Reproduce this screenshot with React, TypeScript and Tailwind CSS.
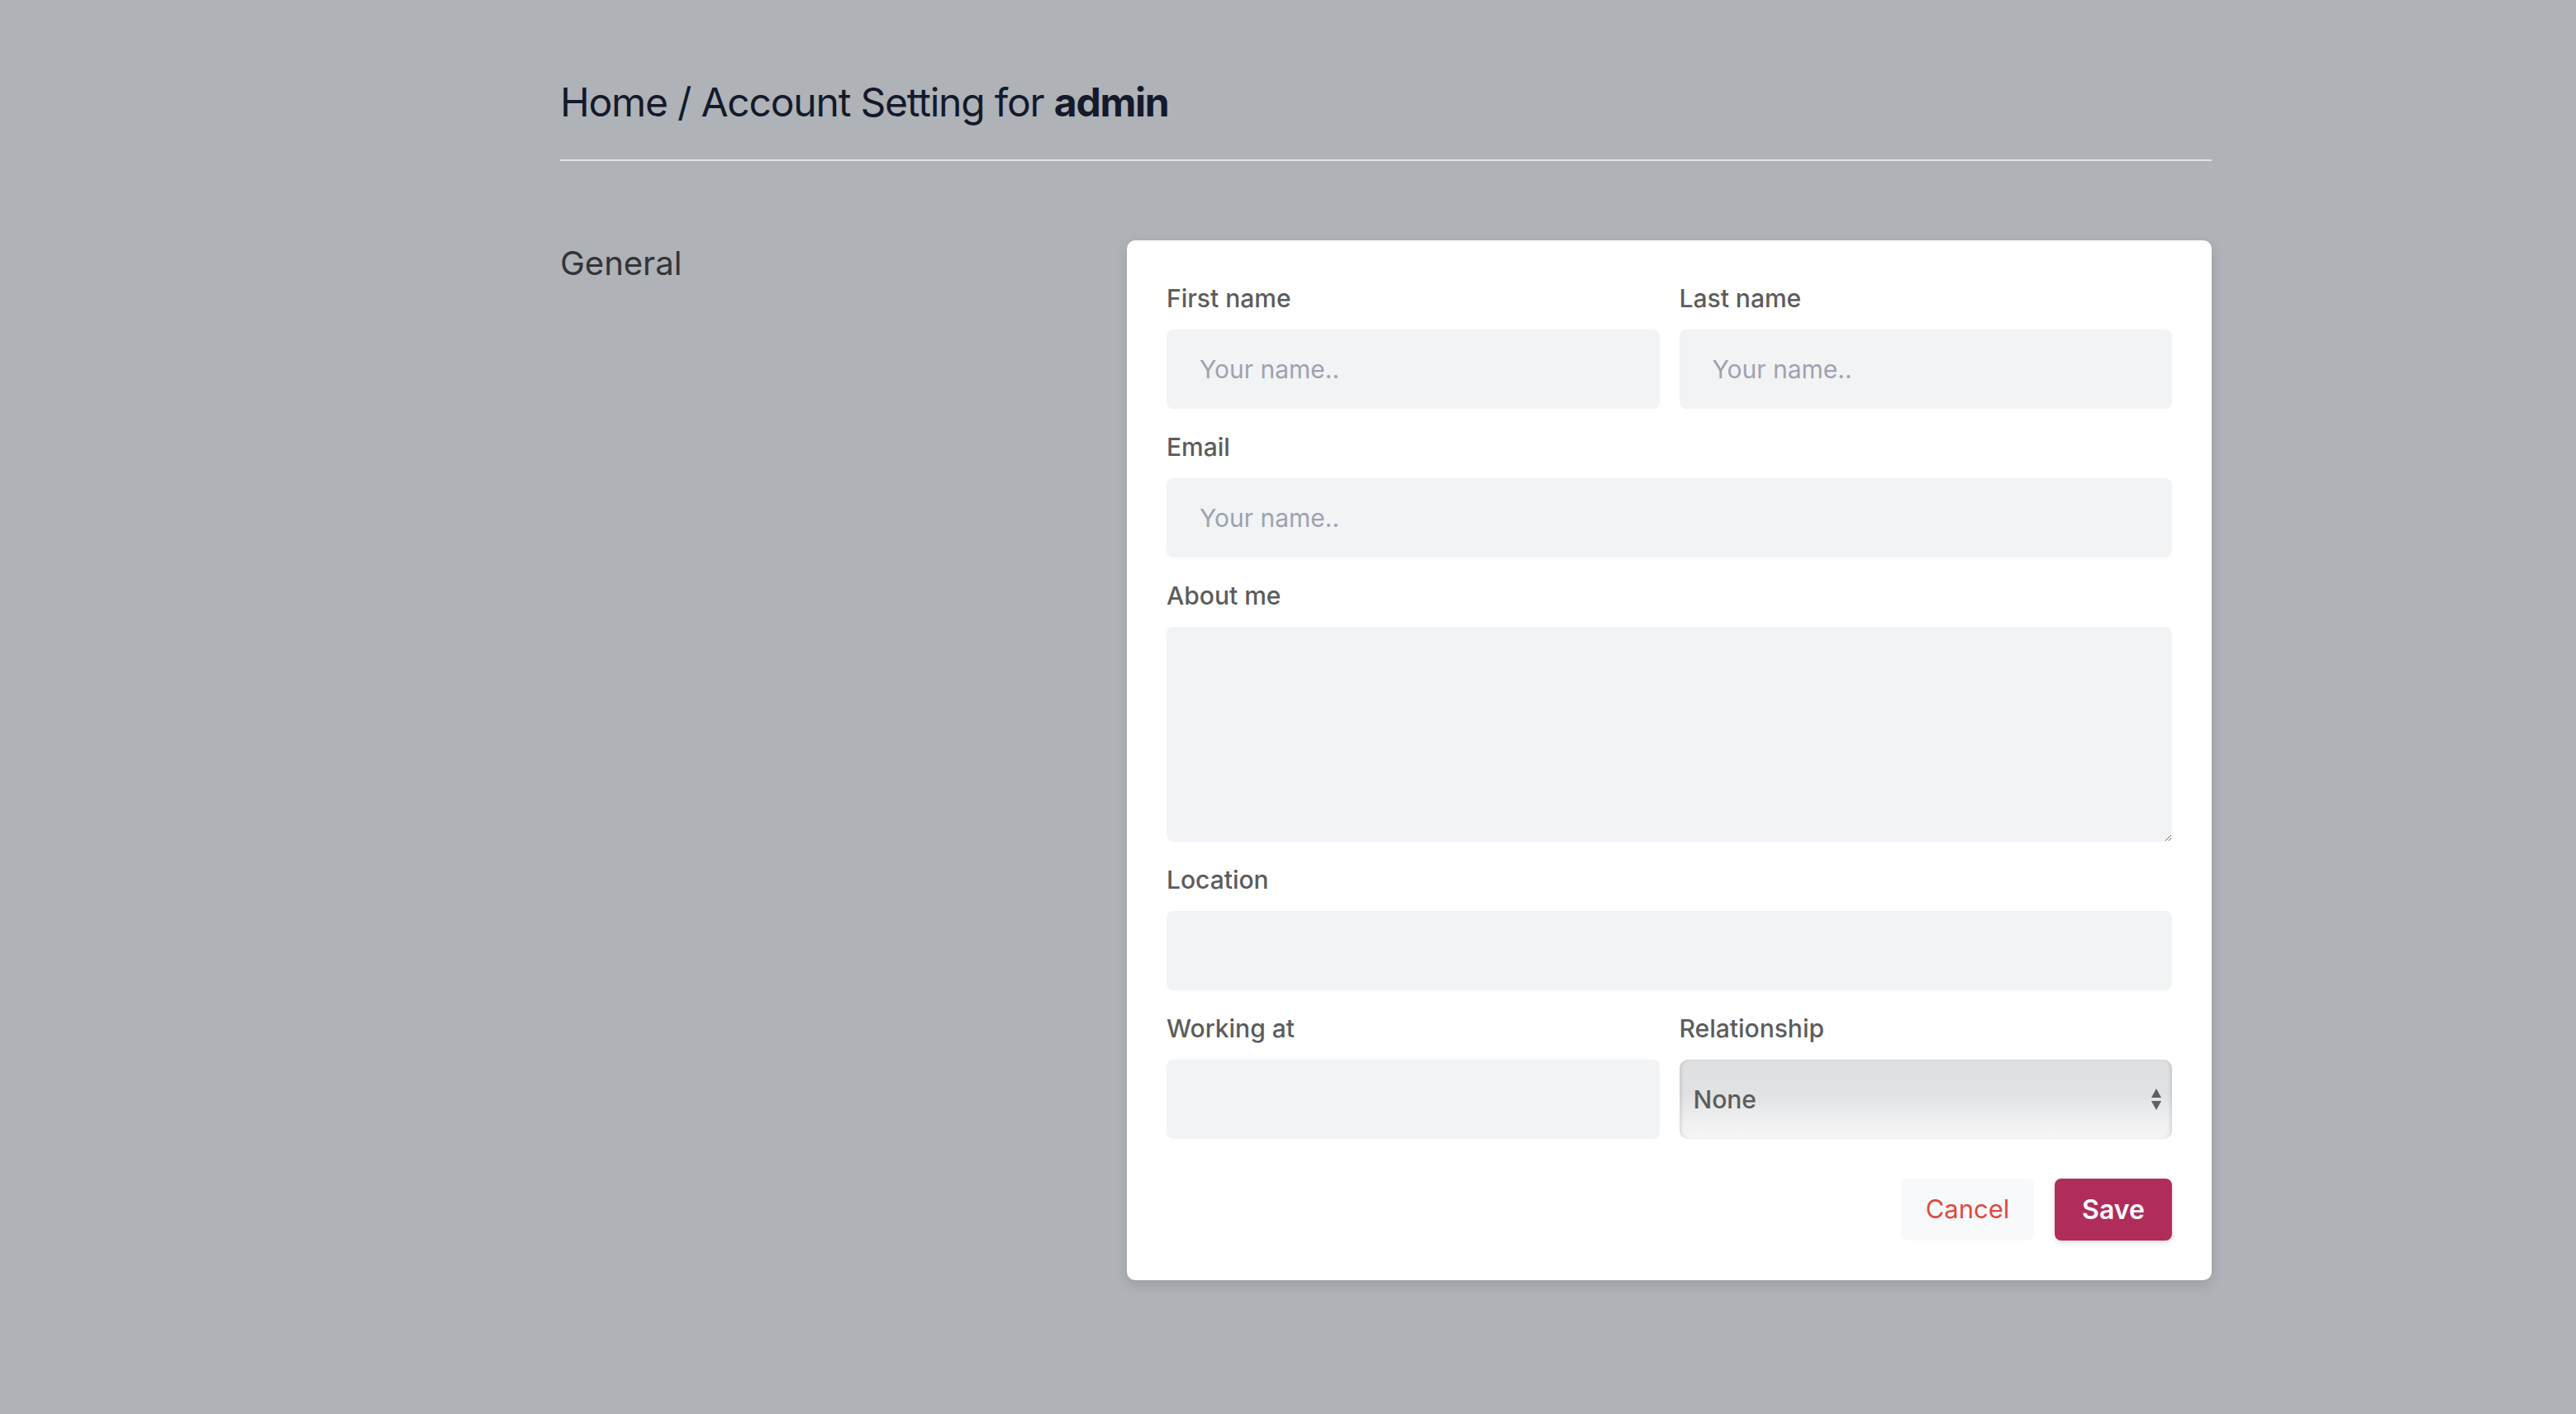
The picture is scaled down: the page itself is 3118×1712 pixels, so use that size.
import React from "react";

function Field({ label, children }: { label: string; children: React.ReactNode }) {
  return (
    <div className="flex flex-col">
      <label className="text-[30px] leading-[40px] font-medium text-[#5c5c5c] pt-[2px] mb-[18px]">{label}</label>
      {children}
    </div>
  );
}

const inputCls =
  "w-full h-[96px] rounded-[8px] bg-[#f2f3f5] px-[40px] text-[30px] text-gray-700 placeholder:text-[#9ca3af] outline-none font-['Inter',sans-serif]";

export default function App() {
  return (
    <div className="min-h-screen w-full bg-[#afb2b7] font-['Inter',sans-serif]">
      <div className="ml-[678px] w-[1999px] pt-[92px]">
        <div className="pb-[37px] border-b-2 border-[#e1e3e6]">
          <h1 className="text-[48px] leading-[64px] tracking-[-1.2px] text-[#141a2b]">
            Home / Account Setting for <span className="font-bold">admin</span>
          </h1>
        </div>

        <div className="mt-[96px] flex">
          <div className="w-[686px] shrink-0">
            <h2 className="text-[40px] leading-[56px] text-[#333436]">General</h2>
          </div>

          <div className="flex-1 bg-white rounded-[10px] shadow-[0_6px_16px_rgba(0,0,0,0.12)] p-[48px]">
            <div className="flex flex-col gap-[24px]">
              <div className="grid grid-cols-2 gap-[24px]">
                <Field label="First name">
                  <input className={inputCls} placeholder="Your name.." />
                </Field>
                <Field label="Last name">
                  <input className={inputCls} placeholder="Your name.." />
                </Field>
              </div>

              <Field label="Email">
                <input className={inputCls} placeholder="Your name.." />
              </Field>

              <Field label="About me">
                <textarea className="w-full h-[260px] rounded-[8px] bg-[#f2f3f5] px-[40px] py-[24px] text-[30px] outline-none block" />
              </Field>

              <Field label="Location">
                <input className={inputCls} />
              </Field>

              <div className="grid grid-cols-2 gap-[24px]">
                <Field label="Working at">
                  <input className={inputCls} />
                </Field>
                <Field label="Relationship">
                  <div className="relative h-[96px] rounded-[10px] bg-[linear-gradient(to_bottom,#dfe0e1_0%,#e1e2e3_45%,#eeeff0_75%,#f5f5f6_100%)] shadow-[inset_4px_0_4px_-2px_rgba(0,0,0,0.12),inset_-4px_0_4px_-2px_rgba(0,0,0,0.12)] flex items-center px-[17px]">
                    <span className="text-[30px] font-medium text-[#5c5c5c]">None</span>
                    <svg className="absolute right-[12px] top-1/2 -translate-y-1/2" width="14" height="28" viewBox="0 0 14 28">
                      <path d="M7 1 L13 12 L1 12 Z" fill="#5f5f5f" />
                      <path d="M1 16 L13 16 L7 27 Z" fill="#5f5f5f" />
                    </svg>
                  </div>
                </Field>
              </div>

              <div className="flex justify-end gap-[25px] mt-[24px]">
                <button className="w-[161px] h-[75px] rounded-[8px] bg-[#f8f9fb] text-[31px] text-[#e0493f]">
                  Cancel
                </button>
                <button className="w-[142px] h-[75px] rounded-[8px] bg-[#b02d5b] text-[32px] font-semibold text-white shadow-[0_2px_6px_rgba(0,0,0,0.15)]">
                  Save
                </button>
              </div>
            </div>
          </div>
        </div>
      </div>
    </div>
  );
}
